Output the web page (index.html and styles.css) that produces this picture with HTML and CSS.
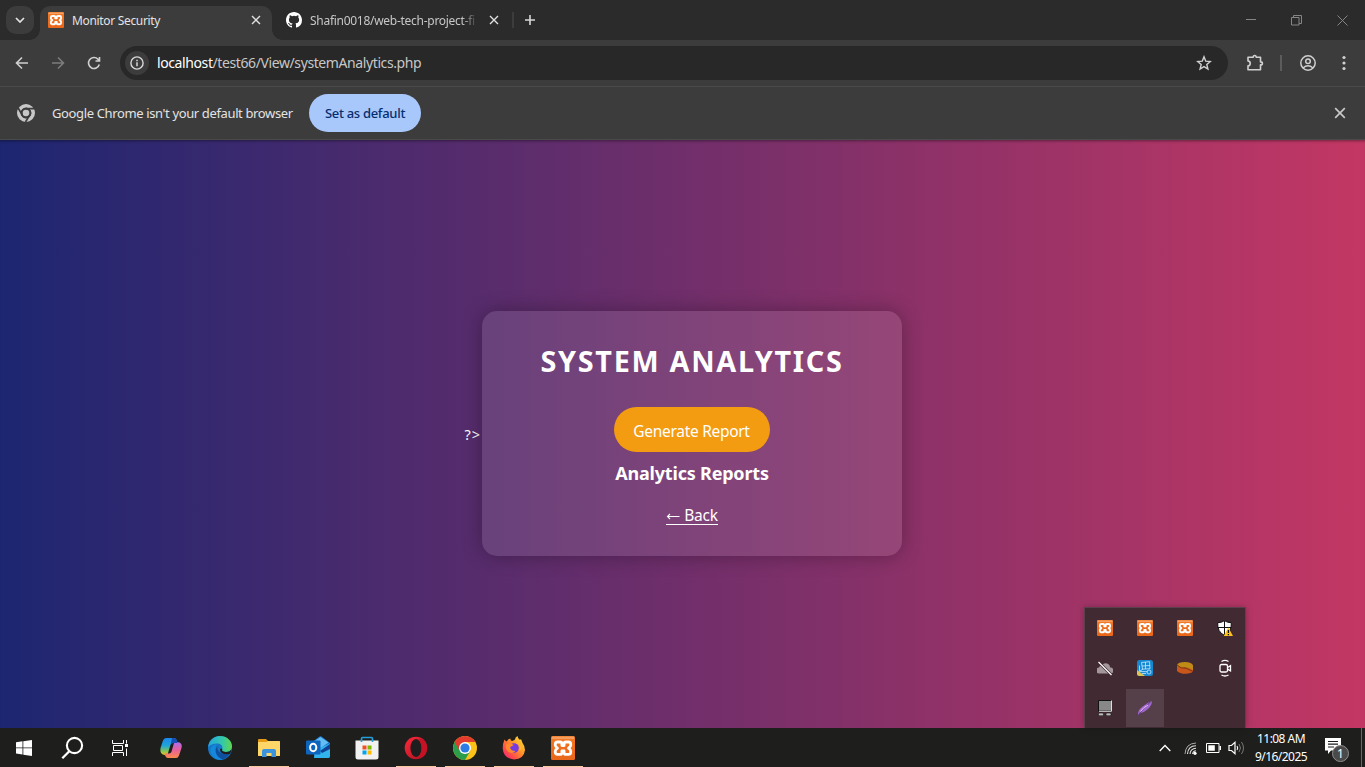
FILE: index.html
```html
<!DOCTYPE html>
<html lang="en">
<head>
<meta charset="utf-8">
<title>Monitor Security</title>
<link rel="stylesheet" href="styles.css">
</head>
<body>
<svg class="defs" width="0" height="0">
  <defs>
    <linearGradient id="gOrange" x2="0" y2="1"><stop offset="0" stop-color="#f08a3c"/><stop offset=".2" stop-color="#f27420"/><stop offset="1" stop-color="#e9661a"/></linearGradient>
    <linearGradient id="gEdge" x1="0" x2="1"><stop offset="0" stop-color="#24a5e0"/><stop offset=".6" stop-color="#35c8a8"/><stop offset="1" stop-color="#62d64c"/></linearGradient>
    <linearGradient id="gCopA" x2="0" y2="1"><stop offset="0" stop-color="#1e86ee"/><stop offset=".45" stop-color="#1fa6d8"/><stop offset=".75" stop-color="#7fc45a"/><stop offset="1" stop-color="#f5c518"/></linearGradient>
    <linearGradient id="gCopB" x2="0" y2="1"><stop offset="0" stop-color="#a86df0"/><stop offset=".5" stop-color="#e8609c"/><stop offset="1" stop-color="#fb8a4a"/></linearGradient>
    <linearGradient id="gOpera" x2="1" y2="1"><stop offset="0" stop-color="#ff2a3c"/><stop offset="1" stop-color="#a80f1e"/></linearGradient>
    <linearGradient id="gFox" x1="1" x2="0" y2="1"><stop offset="0" stop-color="#fff14a"/><stop offset=".4" stop-color="#ff9a24"/><stop offset=".75" stop-color="#ff4450"/><stop offset="1" stop-color="#e8208c"/></linearGradient>
    <symbol id="xampp" viewBox="0 0 24 24">
      <rect width="24" height="24" rx="1.500" fill="url(#gOrange)"/>
      <path d="M1 2h22" stroke="#f8b98c" stroke-width="1"/>
      <path d="M6.500 6h2.700q1.700 0 1.700 1.700v1.800h2.200V7.700q0-1.700 1.700-1.700h2.700q2.200 0 2.200 2.200v1q0 1.500-2.200 3 2.200 1.500 2.200 3v1q0 2.200-2.200 2.200h-2.700q-1.700 0-1.700-1.700v-1.800h-2.200v1.800q0 1.700-1.700 1.700H6.500q-2.200 0-2.200-2.200v-1q0-1.500 2.200-3-2.200-1.500-2.200-3v-1Q4.300 6 6.500 6Z" fill="none" stroke="#fff" stroke-width="2.800" stroke-linejoin="round"/>
    </symbol>
    <symbol id="close" viewBox="0 0 10 10"><path d="m1 1 8 8M9 1 1 9" fill="none" stroke="currentColor" stroke-width="1.400"/></symbol>
  </defs>
</svg>

<header class="browser">
  <div class="tabstrip">
    <button class="tab-search"><svg width="10" height="6" viewBox="0 0 10 6"><path d="m1 1 4 4 4-4" fill="none" stroke="#e3e3e3" stroke-width="1.700"/></svg></button>
    <div class="tab active">
      <svg class="favicon" width="16" height="16"><use href="#xampp"/></svg>
      <span class="tab-title t-monitor">Monitor Security</span>
      <svg class="tab-close" width="10" height="10"><use href="#close"/></svg>
    </div>
    <div class="tab">
      <svg class="favicon" width="16" height="16" viewBox="0 0 16 16"><path fill="#fff" d="M8 0C3.580 0 0 3.580 0 8c0 3.540 2.290 6.530 5.470 7.590.4.070.55-.17.55-.38 0-.19-.01-.82-.01-1.490-2.010.37-2.530-.49-2.690-.94-.09-.23-.48-.94-.82-1.130-.28-.15-.68-.52-.01-.53.63-.01 1.080.58 1.230.82.72 1.210 1.870.87 2.330.66.070-.52.28-.87.51-1.070-1.780-.2-3.640-.89-3.640-3.950 0-.87.31-1.590.82-2.150-.08-.2-.36-1.020.08-2.120 0 0 .67-.21 2.200.82a7.600 7.600 0 0 1 4 0c1.530-1.040 2.200-.82 2.200-.82.44 1.100.16 1.920.08 2.120.51.56.82 1.270.82 2.150 0 3.070-1.870 3.750-3.650 3.950.29.25.54.73.54 1.480 0 1.070-.01 1.930-.01 2.200 0 .21.15.46.55.38A8.010 8.010 0 0 0 16 8c0-4.420-3.580-8-8-8Z"/></svg>
      <span class="tab-title t-github">Shafin0018/web-tech-project-fi</span>
      <svg class="tab-close" width="10" height="10"><use href="#close"/></svg>
    </div>
    <span class="tab-divider"></span>
    <svg class="new-tab" width="12" height="12" viewBox="0 0 12 12"><path d="M6 1v10M1 6h10" stroke="#d8d8d8" stroke-width="1.600"/></svg>
    <div class="window-controls">
      <svg width="10" height="10" viewBox="0 0 10 10"><path d="M0 4.500h10" stroke="#858585"/></svg>
      <svg width="11" height="11" viewBox="0 0 11 11"><path d="M.5 2.500h7.500v7.500H.5zM2.500 2.500v-2h8v8H8" fill="none" stroke="#858585"/></svg>
      <svg width="11" height="11" viewBox="0 0 11 11"><path d="m.5.5 10 10m0-10-10 10" stroke="#858585"/></svg>
    </div>
  </div>

  <div class="toolbar">
    <svg class="nav" width="16" height="16" viewBox="0 0 16 16"><path d="M14 8H3m5-5.500L2.500 8 8 13.500" fill="none" stroke="#d0d0d0" stroke-width="1.600"/></svg>
    <svg class="nav" width="16" height="16" viewBox="0 0 16 16"><path d="M2 8h11M8 2.500 13.500 8 8 13.500" fill="none" stroke="#7c7c7c" stroke-width="1.600"/></svg>
    <svg class="nav" width="16" height="16" viewBox="0 0 16 16"><path d="M13.300 9.500A5.500 5.500 0 1 1 12 4.200l1.200 1.300M13.500 2v4h-4" fill="none" stroke="#d0d0d0" stroke-width="1.600"/></svg>
    <div class="omnibox">
      <span class="site-info"><svg width="14" height="14" viewBox="0 0 14 14"><circle cx="7" cy="7" r="6.100" fill="none" stroke="#d8d8d8" stroke-width="1.400"/><path d="M7 6.200v4M7 3.700v1.500" stroke="#d8d8d8" stroke-width="1.500"/></svg></span>
      <span class="url"><b>localhost</b>/test66/View/systemAnalytics.php</span>
      <svg class="star" width="16" height="16" viewBox="0 0 16 16"><path d="m8 1.800 1.700 4.300 4.600.4-3.500 3 1.100 4.500L8 11.600 4.100 14l1.100-4.500-3.500-3 4.600-.4Z" fill="none" stroke="#d0d0d0" stroke-width="1.400"/></svg>
    </div>
    <svg class="ext" width="18" height="18" viewBox="0 0 18 18"><path d="M2 3.300h5.200q0-1.800 1.500-1.800t1.500 1.800h4.300v4.600q1.900 0 1.900 1.500t-1.900 1.500v4.900H2v-3.900q2.200-.4 2.200-2.500T2 6.900Z" fill="none" stroke="#d0d0d0" stroke-width="1.600" stroke-linejoin="round"/></svg>
    <span class="tool-divider"></span>
    <svg class="profile" width="16" height="16" viewBox="0 0 16 16"><g fill="none" stroke="#d0d0d0" stroke-width="1.500"><circle cx="8" cy="8" r="7.200"/><circle cx="8" cy="6.200" r="2.300"/><path d="M3 13q5-4.400 10 0"/></g></svg>
    <svg class="menu" width="4" height="16" viewBox="0 0 4 16"><g fill="#d0d0d0"><circle cx="2" cy="2.500" r="1.600"/><circle cx="2" cy="8" r="1.600"/><circle cx="2" cy="13.500" r="1.600"/></g></svg>
  </div>

  <div class="infobar">
    <svg width="18" height="18" viewBox="0 0 18 18"><circle cx="9" cy="9" r="7.200" fill="none" stroke="#c7c7c7" stroke-width="3.600"/><circle cx="9" cy="9" r="4.300" fill="#c7c7c7" stroke="#3c3c3c" stroke-width="2"/><path d="M9 4.700h8.500M5.300 11.100 1 3.800M12.700 11.100 8.500 18" stroke="#3c3c3c" stroke-width="1.700"/></svg>
    <span class="info-text">Google Chrome isn't your default browser</span>
    <button class="set-default"><span>Set as default</span></button>
    <svg class="info-close" width="12" height="12"><use href="#close"/></svg>
  </div>
</header>

<main class="page">
  <span class="stray">?&gt;</span>
  <section class="card">
    <h1>SYSTEM ANALYTICS</h1>
    <button class="generate"><span>Generate Report</span></button>
    <h3>Analytics Reports</h3>
    <a class="back"><svg width="14" height="9" viewBox="0 0 14 9"><path d="M13.500 5.500H1.500M4 3 1.500 5.500 4 8" fill="none" stroke="#fff" stroke-width="1.100"/></svg><span>Back</span></a>
  </section>
</main>

<aside class="tray-popup">
  <div class="cell"><svg width="16" height="16"><use href="#xampp"/></svg></div>
  <div class="cell"><svg width="16" height="16"><use href="#xampp"/></svg></div>
  <div class="cell"><svg width="16" height="16"><use href="#xampp"/></svg></div>
  <div class="cell"><svg width="16" height="16" viewBox="0 0 16 16"><path d="M7.500.6Q10 2.700 14.300 2.700q.6 9.300-6.800 12.700Q.1 12 .700 2.700 5 2.700 7.500.6Z" fill="#fff" stroke="#111"/><path d="M7.500 1v14M1 7.500h13" stroke="#111" stroke-width="1"/><path d="m11.300 7.500 4.700 8.500H6.700Z" fill="#ffc220"/><path d="M11.400 10v3m0 1v1.300" stroke="#111" stroke-width="1.300"/></svg></div>
  <div class="cell"><svg width="16" height="16" viewBox="0 0 16 16"><path d="M2.500 13.500a3 3 0 0 1-.4-6 3 3 0 0 1 3-2.500 4.500 4.500 0 0 1 8 2.500 3 3 0 0 1 .4 6Z" fill="#a3979c"/><path d="m1.500 2 13 13" stroke="#422a33" stroke-width="2.600"/><path d="m1.500 2 13 13" stroke="#fff" stroke-width="1.300"/></svg></div>
  <div class="cell"><svg width="16" height="16" viewBox="0 0 16 16"><rect width="16" height="16" rx="2.500" fill="#1688d2"/><path d="M0 10v4q0 2 2.500 2H8Z" fill="#e0c453"/><g fill="none" stroke="#c5eaff" stroke-width=".8"><path d="m4.500 2.500 8-.8.5 7-7.500.5ZM5 6l8-.5M8.500 2v7M2.500 5.500v6l8 .2"/><circle cx="12" cy="12" r="2"/><path d="m3 11 3-2M5 13.500h4"/></g></svg></div>
  <div class="cell"><svg width="16" height="16" viewBox="0 0 16 16"><path d="M0 5v6q3 3 9 2.800 5-.2 7-2.300V5q-4 3-9 2.600Z" fill="#c9571c"/><path d="M0 5q1-3 8-3t8 3.500V10Q12 7.500 7 7.600 2 8 0 5Z" fill="#c08a16"/><path d="M0 5q4 4 9 3.200l7 3.300" fill="none" stroke="#7c3411"/></svg></div>
  <div class="cell"><svg width="16" height="18" viewBox="0 0 16 18"><g fill="none" stroke="#fff" stroke-width="1.300"><rect x="3" y="5.500" width="7.500" height="7.500" rx="1.500"/><path d="m10.500 8.500 3-1.800v5.200l-3-1.800M4.500 2.500q3.500-2.200 7 0M4.500 16q3.500 2 7 0"/></g></svg></div>
  <div class="cell"><svg width="16" height="16" viewBox="0 0 16 16"><path d="M1.500.5h13v10.500h-13z" fill="#888" stroke="#111"/><path d="M2 11.300h12.500V.5" fill="none" stroke="#ddd"/><rect x="1.500" y="13" width="5" height="2.800" rx="1" fill="#bbb" stroke="#111" stroke-width=".6"/><rect x="9" y="13" width="5" height="2.800" rx="1" fill="#bbb" stroke="#111" stroke-width=".6"/></svg></div>
  <div class="cell hover"><svg width="16" height="16" viewBox="0 0 16 16"><path d="M1 15.500q-.5-5 4-8.500T15 .5q0 5-4 8.500t-7.500 4Z" fill="#a267cf"/><path d="M1 15.500Q6 8 15 .5" fill="none" stroke="#4b2a6c" stroke-width=".7"/><path d="M3.500 11.500Q6 7.500 11 5" fill="none" stroke="#e5ccf5"/></svg></div>
</aside>

<footer class="taskbar">
  <div class="apps">
    <div class="app"><svg width="16" height="16" viewBox="0 0 16 16"><path d="m0 2.200 6.500-.9v6.200H0Zm7.300-1L16 0v7.500H7.300ZM0 8.300h6.500v6.200L0 13.600Zm7.300 0H16V16l-8.700-1.300Z" fill="#fff"/></svg></div>
    <div class="app"><svg width="24" height="24" viewBox="0 0 24 24"><circle cx="13.500" cy="9.500" r="7.600" fill="none" stroke="#fff" stroke-width="2.100"/><path d="m8.300 15.200-7 7" stroke="#fff" stroke-width="2.300"/></svg></div>
    <div class="app task-view"><svg width="17" height="16" viewBox="0 0 17 16"><g fill="none" stroke="#fff"><path d="M.5 0v3.500h11V0M.5 16v-3.500h11V16M1.500 5.500h9v5h-9zM14.500 0v3.500M14.500 8.500V16"/></g><rect x="13" y="4" width="3" height="3" fill="#fff"/></svg></div>
    <div class="app"><svg width="24" height="24" viewBox="0 0 24 24"><path d="M7 2h8q2 0 2.600 2l1 3H14q-2 0-2.600 2l-2.500 8.500Q8 20 5.500 19 .5 18 1.500 12L4 4.500Q4.800 2 7 2Z" fill="url(#gCopA)"/><path d="M17 22H9q-2 0-2.600-2l-1-2.500H10q2 0 2.600-2l2.500-9Q16 5.500 18 6q6 .5 4.500 6L20 19.500q-.8 2.500-3 2.500Z" fill="url(#gCopB)"/><path d="M13 2h2q2 0 2.600 2l1 3H14q-1.500 0-2.300 1.500Z" fill="#164fb5"/></svg></div>
    <div class="app"><svg width="24" height="24" viewBox="0 0 24 24"><circle cx="12" cy="12" r="12" fill="#1677c8"/><path d="M.2 11C1 4 6 0 12 0c7 0 12 5 12 10 0 4-3 6-6.500 6-3 0-4-1.200-3.500-2 1.500-4-1-6.500-5-6.500-4 0-7 1.500-8.800 3.500Z" fill="url(#gEdge)"/><path d="M9 8.500C6 11 6 21 15 23.600 8 25 3 20 2.500 14.500 2.500 11 6 8.500 9 8.500Z" fill="#1489dc"/><path d="M9.500 10C8.500 15 13 19.500 21.500 18 19 22 16 23.500 14 23.200 7 20 6.500 13 9.500 10Z" fill="#0f4f9e"/><path d="M14.400 13.300q-1.500 2.200 3.200 2.700 4 .1 6-2.500-.5 2.800-1.600 4.500-9.500 1.500-10-4.500Q13 11.500 14.400 13.300Z" fill="#1e1e1e"/></svg></div>
    <div class="app open"><svg width="22" height="18" viewBox="0 0 22 18"><path d="M0 1q0-1 1-1h7l2 2h11q1 0 1 1v14H0Z" fill="#e49a15"/><path d="M0 3h8l2-1h11q1 0 1 1v13q0 1-1 1H1q-1 0-1-1Z" fill="#ffd768"/><path d="M4 18v-6q0-2 2-2h10q2 0 2 2v6h-4.500v-4h-5v4Z" fill="#3a93dc"/></svg></div>
    <div class="app"><svg width="24" height="24" viewBox="0 0 24 24"><path d="M5 7 13.500.6q1-.8 2 0L24 7v13q0 2-2 2H9Z" fill="#1c75cd"/><path d="M7 6 14.500 1l8 5.500-8.500 6Z" fill="#64bdf2"/><path d="M9 14 24 7.500V20q0 2-2 2H8Z" fill="#31b4ee"/><path d="m14 15 10-7v5l-8 4Z" fill="#113f96"/><rect y="4.500" width="14.500" height="14" rx="1" fill="#0f64bd"/><ellipse cx="7.200" cy="11.500" rx="3.100" ry="3.700" fill="none" stroke="#fff" stroke-width="2"/></svg></div>
    <div class="app"><svg width="24" height="24" viewBox="0 0 24 24"><path d="M.5 4.500h23V21q0 2.500-2.500 2.500H3Q.5 23.500.5 21Z" fill="#f1f1f1"/><path d="M6.500 6V3q0-1.500 1-1.500h9q1 0 1 1.500v3" fill="none" stroke="#259edb" stroke-width="1.700"/><path d="M7.500 9.500h4v4h-4z" fill="#f25022"/><path d="M12.500 9.500h4v4h-4z" fill="#7fba00"/><path d="M7.500 14.500h4v4h-4z" fill="#00a4ef"/><path d="M12.500 14.500h4v4h-4z" fill="#ffb900"/></svg></div>
    <div class="app open"><svg width="24" height="24" viewBox="0 0 24 24"><circle cx="12" cy="12" r="11.300" fill="url(#gOpera)"/><ellipse cx="12" cy="12" rx="5.600" ry="9" fill="#1e1e1e"/><path d="M14 3.200q8-2.200 9 8.800-1 11-9 8.800 3.500-2 3.500-8.800T14 3.200Z" fill="#c51224"/></svg></div>
    <div class="app open"><svg width="24" height="24" viewBox="0 0 24 24"><circle cx="12" cy="12" r="12" fill="#fbc116"/><path d="M12 12 1.610 6A12 12 0 0 0 12 24l5.200-9Z" fill="#2c9d4b"/><path d="M1.610 6A12 12 0 0 1 22.390 6H12l-5.200 9Z" fill="#e33b2e"/><circle cx="12" cy="12" r="6" fill="#fff"/><circle cx="12" cy="12" r="4.600" fill="#2d7be5"/></svg></div>
    <div class="app open"><svg width="24" height="24" viewBox="0 0 24 24"><path d="M2.500 3.500q.8 1.500 2.300 2Q6 3 8.500 2.500 8 4.500 10 5q1.500-.5 3-1.500 0-2.500 2.500-3.500 0 2.500 2.500 4l1-1 1.500 4q2.500 3 2.500 7-1 9-11 9.500Q1.500 22.500.8 13 .5 8 2.500 3.500Z" fill="url(#gFox)"/><circle cx="12" cy="12" r="4.800" fill="#763be0"/><path d="M4.500 8Q9 6.500 12 9q-3 1-4 2.500 1 3.500 5.500 3.500-3 3.500-7.500.5-4-3.500-1.500-7.500Z" fill="#ff8a2c"/><path d="M14 7.500q6 1 3 7.500 3.500-1 3.500-5-1-4-4-5Z" fill="#ffb62c"/></svg></div>
    <div class="app open"><svg width="24" height="24"><use href="#xampp"/></svg></div>
  </div>
  <div class="tray">
    <svg width="12" height="8" viewBox="0 0 12 8"><path d="m.7 7 5.300-5.500L11.300 7" fill="none" stroke="#fff" stroke-width="1.300"/></svg>
    <svg class="wifi" width="13" height="13" viewBox="0 0 13 13"><g fill="none" stroke="#ddd" stroke-width="1.100"><path d="M3.500 12Q4 4 12 3.800M6 12Q6.500 6.500 12 6.300M8.500 12Q9 9 12 8.700"/></g><path d="M1 12Q1.500 1.500 12 1" fill="none" stroke="#aaa"/><circle cx="11" cy="11.300" r="1.600" fill="#fff"/></svg>
    <svg class="battery" width="15" height="10" viewBox="0 0 15 10"><path d="M.5.500h12.500v9H.5z" fill="none" stroke="#fff"/><path d="M13.500 3h1.500v4h-1.500zM2.300 2.300h6.500v5.400H2.300z" fill="#fff"/></svg>
    <svg class="volume" width="17" height="14" viewBox="0 0 17 14"><path d="M1 4.500h2.500L7 1.300v11.400L3.500 9.500H1Z" fill="none" stroke="#fff" stroke-width="1.200"/><path d="M9 5q1.500 2 0 4" fill="none" stroke="#fff" stroke-width="1.200"/><path d="M11 3q3 4 0 8M13.500 1q4 6 0 12" fill="none" stroke="#777"/></svg>
    <div class="clock"><span class="time">11:08 AM</span><span class="date">9/16/2025</span></div>
    <div class="notify"><svg width="16" height="16" viewBox="0 0 16 16"><path d="M0 0h16v12.500H6L3 16v-3.500H0Z" fill="#fff"/><path d="M3 3.500h10M3 6.200h10M3 9h6" stroke="#1e1e1e" stroke-width="1.200"/></svg><span class="badge">1</span></div>
    <span class="show-desktop"></span>
  </div>
</footer>
</body>
</html>
```

FILE: styles.css
```css
* { box-sizing: border-box; }
body {
  margin: 0;
  width: 1365px;
  height: 767px;
  overflow: hidden;
  display: flex;
  flex-direction: column;
  font-family: "Noto Sans", "Open Sans", sans-serif;
  color: #fff;
  background: #1e1e1e;
}
svg { display: block; flex: none; }
span { white-space: nowrap; }
button { border: 0; padding: 0; font: inherit; color: inherit; display: flex; align-items: center; justify-content: center; }
.defs { position: absolute; }

.browser { height: 140px; flex: none; background: #3c3c3c; }
.tabstrip { height: 40px; background: #2b2b2b; display: flex; align-items: center; padding-left: 6px; }
.tab-search { width: 28px; height: 28px; border-radius: 10px; background: #3c3c3c; margin-right: 6px; }
.tab { width: 239px; height: 34px; margin-top: 6px; display: flex; align-items: center; padding: 0 12px 6px 14px; font-size: 12px; color: #c7c7c7; }
.tab.active { width: 232px; padding-left: 8px; padding-right: 11px; background: #3c3c3c; border-radius: 10px 10px 0 0; color: #e3e3e3; position: relative; }
.tab.active::before, .tab.active::after { content: ""; position: absolute; bottom: 0; width: 10px; height: 10px; }
.tab.active::before { left: -10px; background: radial-gradient(circle at 0 0, transparent 9.500px, #3c3c3c 10px); }
.tab.active::after { right: -10px; background: radial-gradient(circle at 100% 0, transparent 9.500px, #3c3c3c 10px); }
.tab-title { margin-left: 8px; margin-right: auto; line-height: 18px; padding-top: 1px; }
.t-monitor { letter-spacing: -.33px; }
.t-github { width: 168px; overflow: hidden; letter-spacing: -.28px; -webkit-mask-image: linear-gradient(90deg, #000 152px, transparent 168px); }
.tab-close { color: #e0e0e0; }
.tab-divider { width: 2px; height: 16px; background: #3c3c3c; margin-left: 1px; }
.new-tab { margin-left: 10px; }
.window-controls { margin-left: auto; display: flex; gap: 35px; padding-right: 17px; align-items: center; }

.toolbar { height: 47px; border-bottom: 1px solid #4a4a4a; display: flex; align-items: center; padding: 0 19px 0 14px; background: #3c3c3c; }
.nav { margin-right: 20px; }
.omnibox { width: 1108px; height: 34px; border-radius: 17px; background: #282828; margin-left: -2px; display: flex; align-items: center; padding: 0 16px 0 5px; }
.site-info { width: 24px; height: 24px; border-radius: 50%; background: #3c3c3c; display: grid; place-items: center; }
.url { margin-left: 8px; font-size: 14px; line-height: 20px; color: #c7c7c7; letter-spacing: -.4px; }
.url b { font-weight: 400; color: #fff; }
.star { margin-left: auto; }
.ext { margin-left: 18px; }
.tool-divider { width: 2px; height: 16px; background: #5c5c5c; margin: 0 18px 0 16px; }
.menu { margin-left: auto; }

.infobar { height: 53px; border-bottom: 1px solid #4a4a4a; display: flex; align-items: center; padding: 0 19px 0 17px; }
.info-text { width: 241px; margin-left: 17px; font-size: 13px; color: #e3e3e3; letter-spacing: -.37px; }
.set-default { width: 112px; height: 38px; border-radius: 19px; margin-left: 16px; background: #a8c7fa; color: #062e6f; font-size: 13px; font-weight: 500; letter-spacing: -.3px; }
.info-close { margin-left: auto; color: #c8c8c8; }

.page { height: 588px; flex: none; display: flex; align-items: center; justify-content: center; padding-bottom: 2px; background: linear-gradient(to right, #1d2671, #c33764); box-shadow: inset 0 3px 3px -2px rgba(0,0,0,.4); }
.stray { width: 17px; font-size: 14.500px; letter-spacing: .9px; margin-right: 1px; padding: 2px 0 0 1px; }
.card { width: 420px; height: 245px; padding-top: 26px; border-radius: 15px; background: rgba(255,255,255,.1); box-shadow: 0 0 20px rgba(0,0,0,.3); display: flex; flex-direction: column; align-items: center; }
.card h1 { margin: 0; font-size: 28.800px; line-height: 48px; letter-spacing: 1.700px; font-weight: 700; white-space: nowrap; padding-left: 1px; }
.generate { width: 156px; height: 45px; margin-top: 22px; border-radius: 23px; background: #f39c12; font-size: 15.500px; letter-spacing: -.3px; padding-top: 3px; }
.card h3 { margin: 8px 0 0; font-size: 18px; line-height: 26px; letter-spacing: -.2px; white-space: nowrap; padding-left: 1px; }
.back { margin-top: 22px; display: flex; align-items: center; gap: 4px; font-size: 15.500px; line-height: 17px; height: 17px; letter-spacing: -.3px; border-bottom: 1px solid #fff; margin-left: 1px; }

.tray-popup { position: absolute; left: 1084px; top: 607px; width: 162px; height: 121px; padding: 1px 0 0 1px; background: #422a33; border: 1px solid #5c404b; border-bottom: 0; display: grid; grid-template-columns: repeat(4, 38px); grid-auto-rows: 38px; gap: 2px; box-shadow: 0 0 6px rgba(0,0,0,.25); }
.cell { display: grid; place-items: center; }
.cell.hover { background: #55404a; }

.taskbar { height: 39px; flex: none; background: #1e1e1d; display: flex; justify-content: space-between; }
.apps { display: flex; gap: 9px; padding-left: 4px; }
.app { width: 40px; height: 39px; display: grid; place-items: center; }
.app.task-view { padding-right: 4px; }
.app.open { border-bottom: 1px solid #f8c79b; padding-top: 1px; }
.tray { display: flex; align-items: center; padding-right: 3px; }
.wifi { margin-left: 13px; margin-top: 2px; }
.battery { margin-left: 9px; }
.volume { margin-left: 7px; }
.clock { width: 56px; margin-left: 8px; display: flex; flex-direction: column; align-items: center; font-size: 12px; line-height: 18px; letter-spacing: -.55px; padding-top: 1px; }
.notify { width: 24px; height: 24px; margin: 5px 0 0 16px; position: relative; }
.badge { position: absolute; left: 7px; top: 7px; width: 17px; height: 17px; border-radius: 50%; background: #4a4a4a; border: 1px solid #909090; font-size: 12px; line-height: 15px; text-align: center; }
.show-desktop { width: 1px; height: 39px; margin-left: 12px; background: #666; }
```
